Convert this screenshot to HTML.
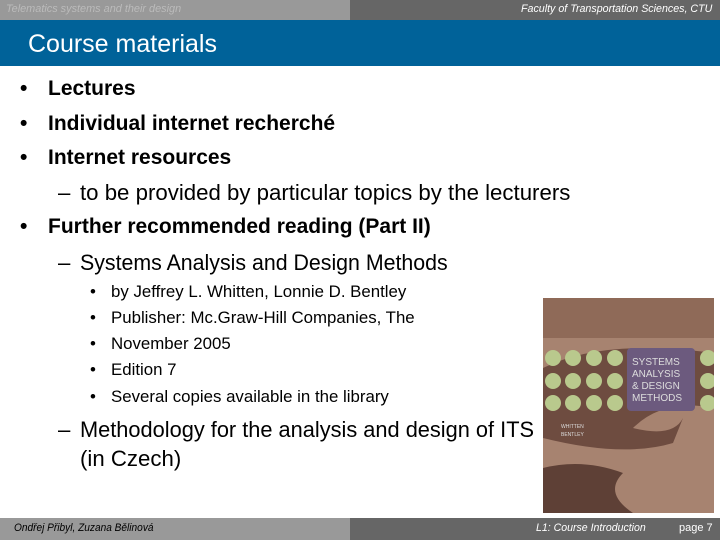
<!DOCTYPE html>
<html><head><meta charset="utf-8"><style>
body{margin:0;width:720px;height:540px;position:relative;overflow:hidden;background:#fff;font-family:"Liberation Sans",sans-serif;color:#000}
.a{position:absolute;white-space:nowrap;transform-origin:0 50%}
.b{font-weight:bold;font-size:21px}
.r{font-size:22px;transform:scaleX(1.01)}
.s{font-size:17px;transform:scaleX(0.99)}
</style></head><body>
<div style="position:absolute;left:0;top:0;width:350px;height:20px;background:#999"></div>
<div style="position:absolute;left:350px;top:0;width:370px;height:20px;background:#666"></div>
<div class="a" style="left:6px;top:3px;font-size:11px;font-style:italic;color:#bbb;transform:scaleX(0.99)">Telematics systems and their design</div>
<div class="a" style="left:521px;top:3px;font-size:11px;font-style:italic;color:#fff;transform:scaleX(0.97)">Faculty of Transportation Sciences, CTU</div>
<div style="position:absolute;left:0;top:20px;width:720px;height:46px;background:#006299"></div>
<div class="a" style="left:28px;top:30px;font-size:25px;color:#fff;transform:scaleX(1.0)">Course materials</div>

<div class="a b" style="left:20px;top:77px">•</div><div class="a b" style="left:48px;top:77px">Lectures</div>
<div class="a b" style="left:20px;top:112px">•</div><div class="a b" style="left:48px;top:112px">Individual internet recherché</div>
<div class="a b" style="left:20px;top:146px">•</div><div class="a b" style="left:48px;top:146px">Internet resources</div>
<div class="a r" style="left:58px;top:180px">–</div><div class="a r" style="left:80px;top:180px">to be provided by particular topics by the lecturers</div>
<div class="a b" style="left:20px;top:215px">•</div><div class="a b" style="left:48px;top:215px">Further recommended reading (Part II)</div>
<div class="a r" style="left:58px;top:250px">–</div><div class="a r" style="left:80px;top:250px;transform:scaleX(0.97)">Systems Analysis and Design Methods</div>
<div class="a s" style="left:90px;top:282px">•</div><div class="a s" style="left:111px;top:282px">by Jeffrey L. Whitten, Lonnie D. Bentley</div>
<div class="a s" style="left:90px;top:308px">•</div><div class="a s" style="left:111px;top:308px">Publisher: Mc.Graw-Hill Companies, The</div>
<div class="a s" style="left:90px;top:334px">•</div><div class="a s" style="left:111px;top:334px">November 2005</div>
<div class="a s" style="left:90px;top:360px">•</div><div class="a s" style="left:111px;top:360px">Edition 7</div>
<div class="a s" style="left:90px;top:387px">•</div><div class="a s" style="left:111px;top:387px">Several copies available in the library</div>
<div class="a r" style="left:58px;top:417px">–</div><div class="a r" style="left:80px;top:417px;transform:scaleX(0.99)">Methodology for the analysis and design of ITS</div>
<div class="a r" style="left:80px;top:446px">(in Czech)</div>

<svg style="position:absolute;left:543px;top:298px" width="171" height="215" viewBox="0 0 171 215">
<rect width="171" height="215" fill="#a78370"/>
<rect y="0" width="171" height="40" fill="#8f6a58"/>
<path d="M0 70 Q60 40 171 55 L171 110 Q120 100 90 130 Q130 140 140 120 L130 145 Q80 160 0 140 Z" fill="#6e4c40"/>
<path d="M0 170 Q40 160 80 175 Q60 195 90 215 L0 215 Z" fill="#5e4036"/>
<g fill="#b9c98d">
<circle cx="10" cy="60" r="8"/><circle cx="30" cy="60" r="8"/><circle cx="51" cy="60" r="8"/><circle cx="72" cy="60" r="8"/><circle cx="165" cy="60" r="8"/>
<circle cx="10" cy="83" r="8"/><circle cx="30" cy="83" r="8"/><circle cx="51" cy="83" r="8"/><circle cx="72" cy="83" r="8"/><circle cx="165" cy="83" r="8"/>
<circle cx="10" cy="105" r="8"/><circle cx="30" cy="105" r="8"/><circle cx="51" cy="105" r="8"/><circle cx="72" cy="105" r="8"/><circle cx="165" cy="105" r="8"/>
</g>
<rect x="84" y="50" width="68" height="63" rx="4" fill="#6c5a7e"/>
<text x="89" y="67" font-size="10" fill="#ddd" font-family="Liberation Sans">SYSTEMS</text>
<text x="89" y="79" font-size="10" fill="#ddd" font-family="Liberation Sans">ANALYSIS</text>
<text x="89" y="91" font-size="10" fill="#ddd" font-family="Liberation Sans">&amp; DESIGN</text>
<text x="89" y="103" font-size="10" fill="#ddd" font-family="Liberation Sans">METHODS</text>
<text x="18" y="130" font-size="5" fill="#ddd" font-family="Liberation Sans">WHITTEN</text>
<text x="18" y="138" font-size="5" fill="#ddd" font-family="Liberation Sans">BENTLEY</text>
</svg>

<div style="position:absolute;left:0;top:518px;width:350px;height:22px;background:#999"></div>
<div style="position:absolute;left:350px;top:518px;width:370px;height:22px;background:#666"></div>
<div class="a" style="left:14px;top:522px;font-size:11px;font-style:italic;color:#000;transform:scaleX(0.92)">Ondřej Přibyl, Zuzana Bělinová</div>
<div class="a" style="left:536px;top:522px;font-size:11px;font-style:italic;color:#fff;transform:scaleX(0.96)">L1: Course Introduction</div>
<div class="a" style="left:679px;top:522px;font-size:11px;color:#fff">page 7</div>
</body></html>
